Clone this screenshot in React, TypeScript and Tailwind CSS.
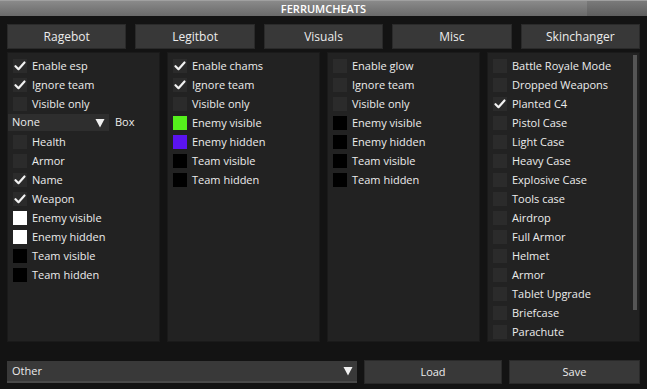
import React from "react";

type Item = { label: string; checked?: boolean; color?: string };

const Check = () => (
  <svg width="12" height="10" viewBox="0 0 12 10" className="block">
    <path d="M1.5 5.2 L4.5 8.2 L10.5 1.5" stroke="#f2f2f2" strokeWidth="2.2" fill="none" strokeLinecap="round" strokeLinejoin="round" />
  </svg>
);

const Row = ({ item }: { item: Item }) => (
  <div className="flex items-center h-[19px] pl-[5px]">
    {item.color ? (
      <div className="w-[14px] h-[14px] mr-[5px]" style={{ background: item.color }} />
    ) : (
      <div className="w-[14px] h-[14px] mr-[5px] bg-[#2b2b2b] flex items-center justify-center">
        {item.checked && <Check />}
      </div>
    )}
    <span className="text-[11px] text-[#ececec] leading-none">{item.label}</span>
  </div>
);

const Panel = ({ children, scroll }: { children: React.ReactNode; scroll?: boolean }) => (
  <div className="relative flex-1 bg-[#222222] border border-[#1a1a1a] pt-[3px]">
    {children}
    {scroll && <div className="absolute right-[2px] top-[2px] w-[4px] h-[255px] bg-[#555555]" />}
  </div>
);

const Arrow = () => (
  <svg width="10" height="10" viewBox="0 0 10 10" className="block">
    <path d="M0.5 1 L9.5 1 L5 9.5 Z" fill="#f0f0f0" />
  </svg>
);

export default function App() {
  const p1a: Item[] = [
    { label: "Enable esp", checked: true },
    { label: "Ignore team", checked: true },
    { label: "Visible only" },
  ];
  const p1b: Item[] = [
    { label: "Health" },
    { label: "Armor" },
    { label: "Name", checked: true },
    { label: "Weapon", checked: true },
    { label: "Enemy visible", color: "#ffffff" },
    { label: "Enemy hidden", color: "#ffffff" },
    { label: "Team visible", color: "#000000" },
    { label: "Team hidden", color: "#000000" },
  ];
  const p2: Item[] = [
    { label: "Enable chams", checked: true },
    { label: "Ignore team", checked: true },
    { label: "Visible only" },
    { label: "Enemy visible", color: "#55f11c" },
    { label: "Enemy hidden", color: "#5a14ee" },
    { label: "Team visible", color: "#000000" },
    { label: "Team hidden", color: "#000000" },
  ];
  const p3: Item[] = [
    { label: "Enable glow" },
    { label: "Ignore team" },
    { label: "Visible only" },
    { label: "Enemy visible", color: "#000000" },
    { label: "Enemy hidden", color: "#000000" },
    { label: "Team visible", color: "#000000" },
    { label: "Team hidden", color: "#000000" },
  ];
  const p4: Item[] = [
    { label: "Battle Royale Mode" },
    { label: "Dropped Weapons" },
    { label: "Planted C4", checked: true },
    { label: "Pistol Case" },
    { label: "Light Case" },
    { label: "Heavy Case" },
    { label: "Explosive Case" },
    { label: "Tools case" },
    { label: "Airdrop" },
    { label: "Full Armor" },
    { label: "Helmet" },
    { label: "Armor" },
    { label: "Tablet Upgrade" },
    { label: "Briefcase" },
    { label: "Parachute" },
  ];
  const tabs = ["Ragebot", "Legitbot", "Visuals", "Misc", "Skinchanger"];

  return (
    <div
      className="w-[647px] h-[389px] bg-[#131313] flex flex-col overflow-hidden"
      style={{ fontFamily: '"Open Sans", "DejaVu Sans", sans-serif' }}
    >
      <div className="h-[16px] flex bg-gradient-to-b from-[#8a8a8a] to-[#6a6a6a] border-t border-[#a0a0a0]">
        <div className="flex-1 flex items-center justify-center text-[11px] font-semibold text-white leading-none pl-[60px]">
          FERRUMCHEATS
        </div>
        <div className="w-[60px] bg-gradient-to-b from-[#7a7a7a] to-[#5e5e5e]" />
      </div>

      <div className="flex gap-[9px] px-[7px] mt-[8px]">
        {tabs.map((t) => (
          <div
            key={t}
            className="flex-1 h-[25px] bg-[#383838] border border-[#2a2a2a] flex items-center justify-center text-[12px] text-[#ececec]"
          >
            {t}
          </div>
        ))}
      </div>

      <div className="flex gap-[7px] px-[7px] mt-[3px] h-[290px]">
        <Panel>
          {p1a.map((i) => (
            <Row key={i.label} item={i} />
          ))}
          <div className="flex items-center h-[19px]">
            <div className="w-[101px] h-[17px] bg-[#2e2e2e] flex items-center justify-between pl-[4px] pr-[4px]">
              <span className="text-[11px] text-[#ececec]">None</span>
              <Arrow />
            </div>
            <span className="text-[11px] text-[#ececec] ml-[6px]">Box</span>
          </div>
          {p1b.map((i) => (
            <Row key={i.label} item={i} />
          ))}
        </Panel>
        <Panel>
          {p2.map((i) => (
            <Row key={i.label} item={i} />
          ))}
        </Panel>
        <Panel>
          {p3.map((i) => (
            <Row key={i.label} item={i} />
          ))}
        </Panel>
        <Panel scroll>
          {p4.map((i) => (
            <Row key={i.label} item={i} />
          ))}
        </Panel>
      </div>

      <div className="flex items-center px-[7px] mt-[18px] gap-[7px]">
        <div className="w-[350px] h-[22px] bg-[#393939] border-b-2 border-[#4a4a4a] flex items-center justify-between pl-[5px] pr-[4px]">
          <span className="text-[11px] text-[#ececec]">Other</span>
          <Arrow />
        </div>
        <div className="w-[138px] h-[24px] bg-[#383838] border border-[#2a2a2a] flex items-center justify-center text-[11px] text-[#ececec]">
          Load
        </div>
        <div className="flex-1 h-[24px] bg-[#383838] border border-[#2a2a2a] flex items-center justify-center text-[11px] text-[#ececec]">
          Save
        </div>
      </div>
    </div>
  );
}
